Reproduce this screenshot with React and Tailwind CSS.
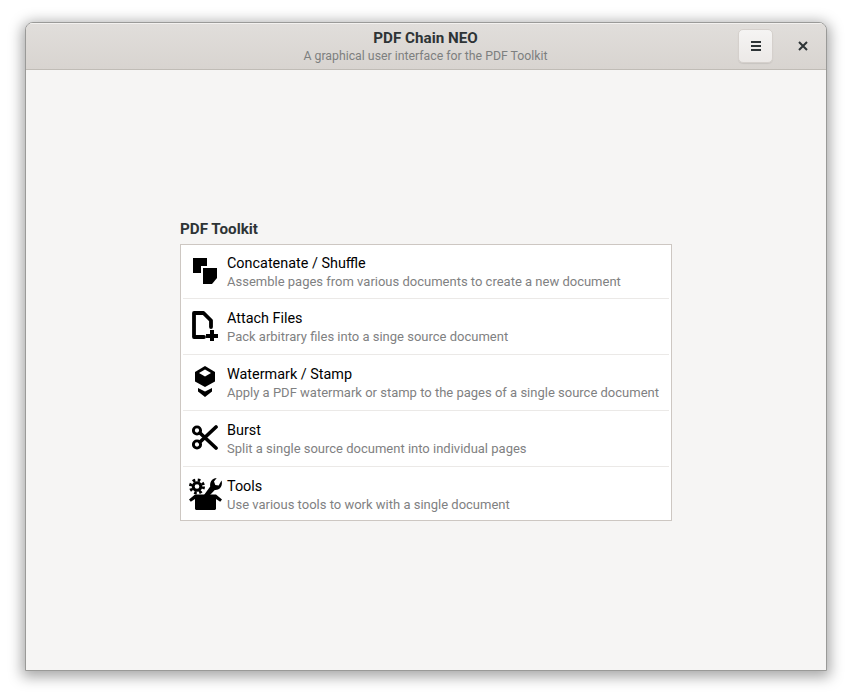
import React from 'react';

const IconPages = () => (
  <svg width="24" height="26" viewBox="0 0 24 26" fill="#000">
    <path d="M0 0h14v8H8v7H0z" />
    <path d="M10 10h14v10l-5 6H10z" />
  </svg>
);

const IconAttach = () => (
  <svg width="26" height="30" viewBox="0 0 26 30" fill="none">
    <path d="M2 2h9.500l7.500 7.500v6.500M2 2v24h10" stroke="#000" strokeWidth="3.800" strokeLinejoin="round" strokeLinecap="round" />
    <path d="M18 19h4v4h4v4h-4v4h-4v-4h-4v-4h4z" fill="#000" />
  </svg>
);

const IconStamp = () => (
  <svg width="20" height="31" viewBox="0 0 20 31" fill="#000">
    <path d="M10 0l10 6v9.500L10 21 0 15.500V6z" />
    <path d="M10 3.500L16 7l-6 3.500L4 7z" fill="#fff" />
    <path d="M3 22l7 3.500 7-3.500v3.500L10 31l-7-5.500z" />
  </svg>
);

const IconBurst = () => (
  <svg width="26" height="25" viewBox="0 0 26 25" fill="none" stroke="#000">
    <circle cx="5" cy="5.500" r="3.600" strokeWidth="2.900" />
    <circle cx="5" cy="19.500" r="3.600" strokeWidth="2.900" />
    <path d="M8 8l16 15M8 17L24 2" strokeWidth="3.700" strokeLinecap="round" />
  </svg>
);

const IconTools = () => (
  <svg width="33" height="32" viewBox="0 0 33 32" fill="#000">
    <circle cx="8" cy="8.500" r="6.500" fill="none" stroke="#000" strokeWidth="3" strokeDasharray="2.600 2.500" />
    <circle cx="8" cy="8.500" r="3.800" fill="none" stroke="#000" strokeWidth="3" />
    <path d="M32.500 2.500c1.200 3.800-.2 7.500-3.500 9-1 .4-2.200.6-3.200.4L21 17h-6l6.200-8.500c-.6-3.500 1-6.700 4-8 .8-.3 1.600-.5 2.500-.5L25 3.500l1.300 3.500 3.400.5z" />
    <path d="M6 16.500h21l6 5-1.800 2.200L27 21v9.500c0 .8-.7 1.500-1.500 1.500h-18c-.8 0-1.500-.7-1.500-1.500V21l-4.200 2.700L0 21.500z" />
  </svg>
);

const rows = [
  { title: 'Concatenate / Shuffle', text: 'Assemble pages from various documents to create a new document', icon: <IconPages /> },
  { title: 'Attach Files', text: 'Pack arbitrary files into a singe source document', icon: <IconAttach /> },
  { title: 'Watermark / Stamp', text: 'Apply a PDF watermark or stamp to the pages of a single source document', icon: <IconStamp /> },
  { title: 'Burst', text: 'Split a single source document into individual pages', icon: <IconBurst /> },
  { title: 'Tools', text: 'Use various tools to work with a single document', icon: <IconTools /> },
];

const App = () => {
  return (
    <div className="h-[699px] w-[852px] overflow-hidden bg-white pl-[25px] pt-[22px] font-['Roboto',sans-serif]">
      <div className="flex h-[649px] w-[802px] flex-col overflow-hidden rounded-t-[8px] border border-[#9a9a98] bg-[#f6f5f4] shadow-[0_3px_14px_3px_rgba(0,0,0,0.35)]">
        <header className="flex h-[47px] shrink-0 items-center border-b border-[#c0bcb6] bg-gradient-to-b from-[#e1dedb] to-[#d8d4d0] shadow-[inset_0_1px_0_#f3f1ef]">
          <div className="ml-[87px] flex-1 pt-[2px] text-center">
            <div className="text-[15.200px] leading-[18px] font-bold text-[#2e3436]">PDF Chain NEO</div>
            <div className="text-[12.300px] leading-[18px] text-[#7d7f7f]">A graphical user interface for the PDF Toolkit</div>
          </div>
          <button className="flex h-[34px] w-[35px] flex-col items-center justify-center gap-[2px] rounded-[5px] border border-[#d5d0cc] bg-gradient-to-b from-[#f5f4f3] to-[#ece9e7] shadow-[0_1px_1px_rgba(0,0,0,0.08)]">
            <span className="h-[2px] w-[10px] bg-[#2e3436]" />
            <span className="h-[2px] w-[10px] bg-[#2e3436]" />
            <span className="h-[2px] w-[10px] bg-[#2e3436]" />
          </button>
          <button className="mr-[11px] ml-[18px] flex h-[24px] w-[24px] items-center justify-center">
            <svg width="10" height="10" viewBox="0 0 10 10" stroke="#2e3436" strokeWidth="2">
              <path d="M1 1l8 8M9 1l-8 8" />
            </svg>
          </button>
        </header>
        <main className="flex flex-1 flex-col items-center pt-[150px]">
          <div className="w-[492px]">
            <h2 className="mb-[6px] text-[15.200px] leading-[18px] font-bold text-[#2e3436]">PDF Toolkit</h2>
            <div className="h-[277px] border border-[#cdc7c2] bg-white px-[2px]">
              {rows.map((row, i) => (
                <div key={row.title} className={`flex ${i > 0 ? 'h-[56px] border-t border-[#ebe9e7]' : 'h-[53px]'}`}>
                  <div className="flex w-[44px] shrink-0 items-center justify-center pb-[2px]">{row.icon}</div>
                  <div className="flex min-w-0 flex-col justify-center whitespace-nowrap pt-[2px]">
                    <div className="text-[14.400px] leading-[18px] text-[#000]">{row.title}</div>
                    <div className="text-[13px] leading-[18px] text-[#7f8182]">{row.text}</div>
                  </div>
                </div>
              ))}
            </div>
          </div>
        </main>
      </div>
    </div>
  );
};

export default App;
